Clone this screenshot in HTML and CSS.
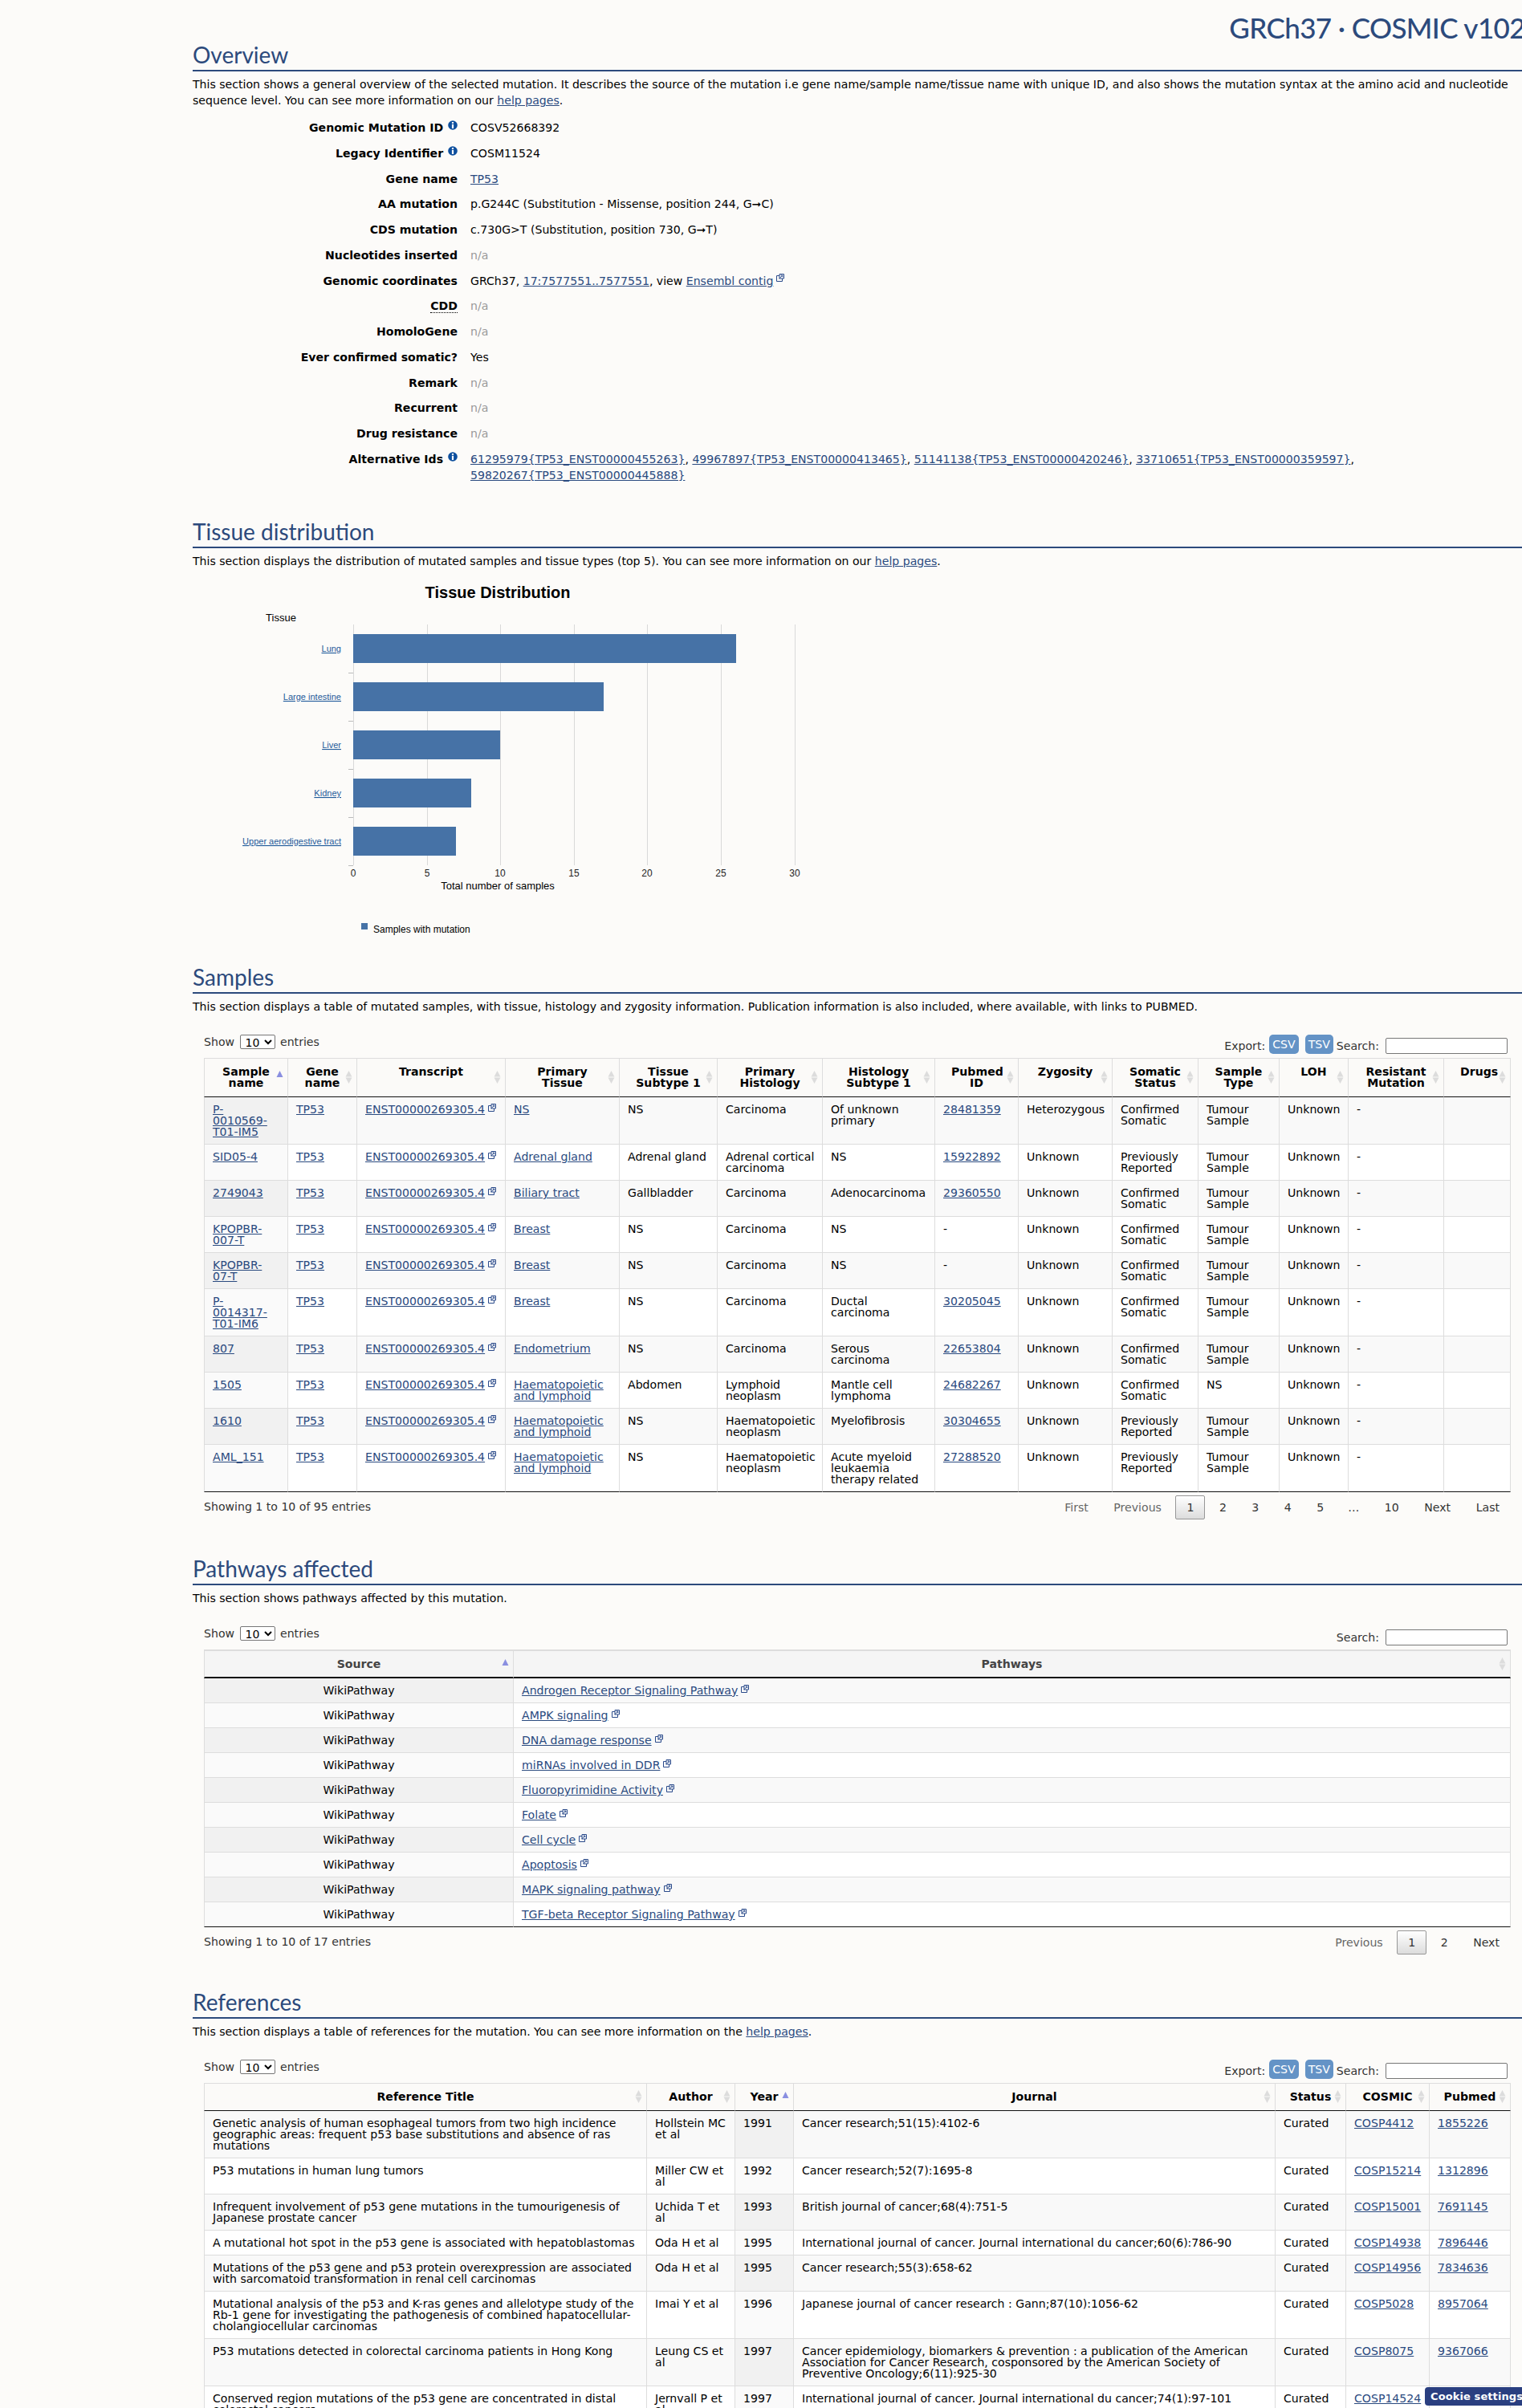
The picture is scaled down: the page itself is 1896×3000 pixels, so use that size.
FILE: index.html
```html
<!DOCTYPE html>
<html lang="en">
<head>
<meta charset="utf-8">
<title>GRCh37 · COSMIC v102</title>
<link rel="stylesheet" href="styles.css">
</head>
<body>
<svg class="defs" width="0" height="0" aria-hidden="true">
  <symbol id="ext" viewBox="0 0 10 10"><path d="M.5 2.500H4M.5 2.500V9.500H7.500V6" fill="none" stroke="#2a4a8a" stroke-width="1"/><path d="M4 .5H9.500V6H4z" fill="#fff" stroke="#2a4a8a" stroke-width="1"/><path d="M7.800 2L3.500 6.300M5.600 2H7.800V4.200" fill="none" stroke="#2a4a8a" stroke-width="1"/></symbol>
  <symbol id="info" viewBox="0 0 12 12"><circle cx="6" cy="6" r="5.800" fill="#0d4f9e"/><rect x="4.900" y="2" width="2.200" height="1.800" fill="#fff"/><rect x="4.900" y="4.800" width="2.200" height="5.200" fill="#fff"/></symbol>
  <symbol id="sort" viewBox="0 0 9 16"><path d="M4.500 0L8.500 7.500H.5z" fill="#dcdcdc"/><path d="M4.500 16L8.500 8.500H.5z" fill="#dcdcdc"/></symbol>
  <symbol id="asc" viewBox="0 0 9 8"><path d="M4.500 0L8.500 8H.5z" fill="#8a8fe0"/></symbol>
</svg>
<div class="page">
  <header class="top"><div class="brand">GRCh37 · COSMIC v102</div></header>

  <section class="sec sec-ov">
    <h2>Overview</h2>
    <p class="intro">This section shows a general overview of the selected mutation. It describes the source of the mutation i.e gene name/sample name/tissue name with unique ID, and also shows the mutation syntax at the amino acid and nucleotide sequence level. You can see more information on our <a href="#">help pages</a>.</p>
    <dl class="facts">
      <dt>Genomic Mutation ID <svg class="ii"><use href="#info"/></svg></dt><dd>COSV52668392</dd>
      <dt>Legacy Identifier <svg class="ii"><use href="#info"/></svg></dt><dd>COSM11524</dd>
      <dt>Gene name</dt><dd><a href="#">TP53</a></dd>
      <dt>AA mutation</dt><dd>p.G244C (Substitution - Missense, position 244, G➞C)</dd>
      <dt>CDS mutation</dt><dd>c.730G&gt;T (Substitution, position 730, G➞T)</dd>
      <dt>Nucleotides inserted</dt><dd class="na">n/a</dd>
      <dt>Genomic coordinates</dt><dd>GRCh37, <a href="#">17:7577551..7577551</a>, view <a href="#">Ensembl contig</a><svg class="xi"><use href="#ext"/></svg></dd>
      <dt><abbr>CDD</abbr></dt><dd class="na">n/a</dd>
      <dt>HomoloGene</dt><dd class="na">n/a</dd>
      <dt>Ever confirmed somatic?</dt><dd>Yes</dd>
      <dt>Remark</dt><dd class="na">n/a</dd>
      <dt>Recurrent</dt><dd class="na">n/a</dd>
      <dt>Drug resistance</dt><dd class="na">n/a</dd>
      <dt>Alternative Ids <svg class="ii"><use href="#info"/></svg></dt><dd><a href="#">61295979{TP53_ENST00000455263}</a>, <a href="#">49967897{TP53_ENST00000413465}</a>, <a href="#">51141138{TP53_ENST00000420246}</a>, <a href="#">33710651{TP53_ENST00000359597}</a>, <a href="#">59820267{TP53_ENST00000445888}</a></dd>
    </dl>
  </section>

  <section class="sec sec-ti">
    <h2>Tissue distribution</h2>
    <p class="intro">This section displays the distribution of mutated samples and tissue types (top 5). You can see more information on our <a href="#">help pages</a>.</p>
    <svg class="chart" width="760" height="450" viewBox="240 720 760 450">
      <text class="c-title" x="620" y="745" text-anchor="middle">Tissue Distribution</text>
      <text class="c-13" x="350" y="774" text-anchor="middle">Tissue</text>
      <g class="c-grid">
        <path d="M440.500 778V1078M532.500 778V1078M623.500 778V1078M715.500 778V1078M806.500 778V1078M898.500 778V1078M990.500 778V1078"/>
        <path class="c-tick" d="M434 838.500h6M434 898.500h6M434 958.500h6M434 1018.500h6M434 1078.500h6"/>
      </g>
      <g class="c-bar">
        <rect x="440" y="790" width="477" height="36"/>
        <rect x="440" y="850" width="312" height="36"/>
        <rect x="440" y="910" width="183" height="36"/>
        <rect x="440" y="970" width="147" height="36"/>
        <rect x="440" y="1030" width="128" height="36"/>
      </g>
      <g class="c-link" text-anchor="end">
        <text x="425" y="812">Lung</text>
        <text x="425" y="872">Large intestine</text>
        <text x="425" y="932">Liver</text>
        <text x="425" y="992">Kidney</text>
        <text x="425" y="1052">Upper aerodigestive tract</text>
      </g>
      <g class="c-11" text-anchor="middle">
        <text x="440" y="1092">0</text><text x="532" y="1092">5</text><text x="623" y="1092">10</text><text x="715" y="1092">15</text><text x="806" y="1092">20</text><text x="898" y="1092">25</text><text x="990" y="1092">30</text>
      </g>
      <text class="c-13" x="620" y="1108" text-anchor="middle">Total number of samples</text>
      <rect class="c-leg" x="450" y="1150" width="8" height="8"/>
      <text class="c-12" x="465" y="1162">Samples with mutation</text>
    </svg>
  </section>

  <section class="sec sec-sa">
    <h2>Samples</h2>
    <p class="intro">This section displays a table of mutated samples, with tissue, histology and zygosity information. Publication information is also included, where available, with links to PUBMED.</p>
    <div class="dt">
      <div class="dt-top">
        <label class="len">Show <select><option>10</option></select> entries</label>
        <div class="tools"><span>Export:</span><a class="btn">CSV</a><a class="btn">TSV</a><span>Search:</span><input type="text"></div>
      </div>
      <table class="tb sample">
        <colgroup><col class="s1"><col class="s2"><col class="s3"><col class="s4"><col class="s5"><col class="s6"><col class="s7"><col class="s8"><col class="s9"><col class="s10"><col class="s11"><col class="s12"><col class="s13"><col class="s14"></colgroup>
        <thead><tr>
          <th>Sample name<svg class="so up"><use href="#asc"/></svg></th><th>Gene name<svg class="so"><use href="#sort"/></svg></th><th class="tp">Transcript<svg class="so"><use href="#sort"/></svg></th><th>Primary Tissue<svg class="so"><use href="#sort"/></svg></th><th>Tissue Subtype 1<svg class="so"><use href="#sort"/></svg></th><th>Primary Histology<svg class="so"><use href="#sort"/></svg></th><th>Histology Subtype 1<svg class="so"><use href="#sort"/></svg></th><th>Pubmed ID<svg class="so"><use href="#sort"/></svg></th><th class="tp">Zygosity<svg class="so"><use href="#sort"/></svg></th><th>Somatic Status<svg class="so"><use href="#sort"/></svg></th><th>Sample Type<svg class="so"><use href="#sort"/></svg></th><th class="tp">LOH<svg class="so"><use href="#sort"/></svg></th><th>Resistant Mutation<svg class="so"><use href="#sort"/></svg></th><th class="tp">Drugs<svg class="so"><use href="#sort"/></svg></th>
        </tr></thead>
        <tbody>
          <tr><td class="st"><a href="#">P-0010569-T01-IM5</a></td><td><a href="#">TP53</a></td><td><a href="#">ENST00000269305.4</a><svg class="xi"><use href="#ext"/></svg></td><td><a href="#">NS</a></td><td>NS</td><td>Carcinoma</td><td>Of unknown primary</td><td><a href="#">28481359</a></td><td>Heterozygous</td><td>Confirmed Somatic</td><td>Tumour Sample</td><td>Unknown</td><td>-</td><td></td></tr>
          <tr><td class="st"><a href="#">SID05-4</a></td><td><a href="#">TP53</a></td><td><a href="#">ENST00000269305.4</a><svg class="xi"><use href="#ext"/></svg></td><td><a href="#">Adrenal gland</a></td><td>Adrenal gland</td><td>Adrenal cortical carcinoma</td><td>NS</td><td><a href="#">15922892</a></td><td>Unknown</td><td>Previously Reported</td><td>Tumour Sample</td><td>Unknown</td><td>-</td><td></td></tr>
          <tr><td class="st"><a href="#">2749043</a></td><td><a href="#">TP53</a></td><td><a href="#">ENST00000269305.4</a><svg class="xi"><use href="#ext"/></svg></td><td><a href="#">Biliary tract</a></td><td>Gallbladder</td><td>Carcinoma</td><td>Adenocarcinoma</td><td><a href="#">29360550</a></td><td>Unknown</td><td>Confirmed Somatic</td><td>Tumour Sample</td><td>Unknown</td><td>-</td><td></td></tr>
          <tr><td class="st"><a href="#">KPOPBR-007-T</a></td><td><a href="#">TP53</a></td><td><a href="#">ENST00000269305.4</a><svg class="xi"><use href="#ext"/></svg></td><td><a href="#">Breast</a></td><td>NS</td><td>Carcinoma</td><td>NS</td><td>-</td><td>Unknown</td><td>Confirmed Somatic</td><td>Tumour Sample</td><td>Unknown</td><td>-</td><td></td></tr>
          <tr><td class="st"><a href="#">KPOPBR-07-T</a></td><td><a href="#">TP53</a></td><td><a href="#">ENST00000269305.4</a><svg class="xi"><use href="#ext"/></svg></td><td><a href="#">Breast</a></td><td>NS</td><td>Carcinoma</td><td>NS</td><td>-</td><td>Unknown</td><td>Confirmed Somatic</td><td>Tumour Sample</td><td>Unknown</td><td>-</td><td></td></tr>
          <tr><td class="st"><a href="#">P-0014317-T01-IM6</a></td><td><a href="#">TP53</a></td><td><a href="#">ENST00000269305.4</a><svg class="xi"><use href="#ext"/></svg></td><td><a href="#">Breast</a></td><td>NS</td><td>Carcinoma</td><td>Ductal carcinoma</td><td><a href="#">30205045</a></td><td>Unknown</td><td>Confirmed Somatic</td><td>Tumour Sample</td><td>Unknown</td><td>-</td><td></td></tr>
          <tr><td class="st"><a href="#">807</a></td><td><a href="#">TP53</a></td><td><a href="#">ENST00000269305.4</a><svg class="xi"><use href="#ext"/></svg></td><td><a href="#">Endometrium</a></td><td>NS</td><td>Carcinoma</td><td>Serous carcinoma</td><td><a href="#">22653804</a></td><td>Unknown</td><td>Confirmed Somatic</td><td>Tumour Sample</td><td>Unknown</td><td>-</td><td></td></tr>
          <tr><td class="st"><a href="#">1505</a></td><td><a href="#">TP53</a></td><td><a href="#">ENST00000269305.4</a><svg class="xi"><use href="#ext"/></svg></td><td><a href="#">Haematopoietic and lymphoid</a></td><td>Abdomen</td><td>Lymphoid neoplasm</td><td>Mantle cell lymphoma</td><td><a href="#">24682267</a></td><td>Unknown</td><td>Confirmed Somatic</td><td>NS</td><td>Unknown</td><td>-</td><td></td></tr>
          <tr><td class="st"><a href="#">1610</a></td><td><a href="#">TP53</a></td><td><a href="#">ENST00000269305.4</a><svg class="xi"><use href="#ext"/></svg></td><td><a href="#">Haematopoietic and lymphoid</a></td><td>NS</td><td>Haematopoietic neoplasm</td><td>Myelofibrosis</td><td><a href="#">30304655</a></td><td>Unknown</td><td>Previously Reported</td><td>Tumour Sample</td><td>Unknown</td><td>-</td><td></td></tr>
          <tr><td class="st"><a href="#">AML_151</a></td><td><a href="#">TP53</a></td><td><a href="#">ENST00000269305.4</a><svg class="xi"><use href="#ext"/></svg></td><td><a href="#">Haematopoietic and lymphoid</a></td><td>NS</td><td>Haematopoietic neoplasm</td><td>Acute myeloid leukaemia therapy related</td><td><a href="#">27288520</a></td><td>Unknown</td><td>Previously Reported</td><td>Tumour Sample</td><td>Unknown</td><td>-</td><td></td></tr>
        </tbody>
      </table>
      <div class="dt-bot">
        <span>Showing 1 to 10 of 95 entries</span>
        <div class="pg"><a class="off">First</a><a class="off">Previous</a><a class="cur">1</a><a>2</a><a>3</a><a>4</a><a>5</a><i>…</i><a>10</a><a>Next</a><a>Last</a></div>
      </div>
    </div>
  </section>

  <section class="sec sec-pa">
    <h2>Pathways affected</h2>
    <p class="intro">This section shows pathways affected by this mutation.</p>
    <div class="dt">
      <div class="dt-top">
        <label class="len">Show <select><option>10</option></select> entries</label>
        <div class="tools"><span>Search:</span><input type="text"></div>
      </div>
      <table class="tb path">
        <colgroup><col class="p1"><col></colgroup>
        <thead><tr><th>Source<svg class="so up corner"><use href="#asc"/></svg></th><th>Pathways<svg class="so"><use href="#sort"/></svg></th></tr></thead>
        <tbody>
          <tr><td class="st">WikiPathway</td><td><a href="#">Androgen Receptor Signaling Pathway</a><svg class="xi"><use href="#ext"/></svg></td></tr>
          <tr><td class="st">WikiPathway</td><td><a href="#">AMPK signaling</a><svg class="xi"><use href="#ext"/></svg></td></tr>
          <tr><td class="st">WikiPathway</td><td><a href="#">DNA damage response</a><svg class="xi"><use href="#ext"/></svg></td></tr>
          <tr><td class="st">WikiPathway</td><td><a href="#">miRNAs involved in DDR</a><svg class="xi"><use href="#ext"/></svg></td></tr>
          <tr><td class="st">WikiPathway</td><td><a href="#">Fluoropyrimidine Activity</a><svg class="xi"><use href="#ext"/></svg></td></tr>
          <tr><td class="st">WikiPathway</td><td><a href="#">Folate</a><svg class="xi"><use href="#ext"/></svg></td></tr>
          <tr><td class="st">WikiPathway</td><td><a href="#">Cell cycle</a><svg class="xi"><use href="#ext"/></svg></td></tr>
          <tr><td class="st">WikiPathway</td><td><a href="#">Apoptosis</a><svg class="xi"><use href="#ext"/></svg></td></tr>
          <tr><td class="st">WikiPathway</td><td><a href="#">MAPK signaling pathway</a><svg class="xi"><use href="#ext"/></svg></td></tr>
          <tr><td class="st">WikiPathway</td><td><a href="#">TGF-beta Receptor Signaling Pathway</a><svg class="xi"><use href="#ext"/></svg></td></tr>
        </tbody>
      </table>
      <div class="dt-bot">
        <span>Showing 1 to 10 of 17 entries</span>
        <div class="pg"><a class="off">Previous</a><a class="cur">1</a><a>2</a><a>Next</a></div>
      </div>
    </div>
  </section>

  <section class="sec sec-re">
    <h2>References</h2>
    <p class="intro">This section displays a table of references for the mutation. You can see more information on the <a href="#">help pages</a>.</p>
    <div class="dt">
      <div class="dt-top">
        <label class="len">Show <select><option>10</option></select> entries</label>
        <div class="tools"><span>Export:</span><a class="btn">CSV</a><a class="btn">TSV</a><span>Search:</span><input type="text"></div>
      </div>
      <table class="tb refs">
        <colgroup><col class="r1"><col class="r2"><col class="r3"><col class="r4"><col class="r5"><col class="r6"><col class="r7"></colgroup>
        <thead><tr><th>Reference Title<svg class="so"><use href="#sort"/></svg></th><th>Author<svg class="so"><use href="#sort"/></svg></th><th>Year<svg class="so up corner"><use href="#asc"/></svg></th><th>Journal<svg class="so"><use href="#sort"/></svg></th><th>Status<svg class="so"><use href="#sort"/></svg></th><th>COSMIC<svg class="so"><use href="#sort"/></svg></th><th>Pubmed<svg class="so"><use href="#sort"/></svg></th></tr></thead>
        <tbody>
          <tr><td>Genetic analysis of human esophageal tumors from two high incidence geographic areas: frequent p53 base substitutions and absence of ras mutations</td><td>Hollstein MC et al</td><td class="st">1991</td><td>Cancer research;51(15):4102-6</td><td>Curated</td><td><a href="#">COSP4412</a></td><td><a href="#">1855226</a></td></tr>
          <tr><td>P53 mutations in human lung tumors</td><td>Miller CW et al</td><td class="st">1992</td><td>Cancer research;52(7):1695-8</td><td>Curated</td><td><a href="#">COSP15214</a></td><td><a href="#">1312896</a></td></tr>
          <tr><td>Infrequent involvement of p53 gene mutations in the tumourigenesis of Japanese prostate cancer</td><td>Uchida T et al</td><td class="st">1993</td><td>British journal of cancer;68(4):751-5</td><td>Curated</td><td><a href="#">COSP15001</a></td><td><a href="#">7691145</a></td></tr>
          <tr><td>A mutational hot spot in the p53 gene is associated with hepatoblastomas</td><td>Oda H et al</td><td class="st">1995</td><td>International journal of cancer. Journal international du cancer;60(6):786-90</td><td>Curated</td><td><a href="#">COSP14938</a></td><td><a href="#">7896446</a></td></tr>
          <tr><td>Mutations of the p53 gene and p53 protein overexpression are associated with sarcomatoid transformation in renal cell carcinomas</td><td>Oda H et al</td><td class="st">1995</td><td>Cancer research;55(3):658-62</td><td>Curated</td><td><a href="#">COSP14956</a></td><td><a href="#">7834636</a></td></tr>
          <tr><td>Mutational analysis of the p53 and K-ras genes and allelotype study of the Rb-1 gene for investigating the pathogenesis of combined hapatocellular-cholangiocellular carcinomas</td><td>Imai Y et al</td><td class="st">1996</td><td>Japanese journal of cancer research : Gann;87(10):1056-62</td><td>Curated</td><td><a href="#">COSP5028</a></td><td><a href="#">8957064</a></td></tr>
          <tr><td>P53 mutations detected in colorectal carcinoma patients in Hong Kong</td><td>Leung CS et al</td><td class="st">1997</td><td>Cancer epidemiology, biomarkers &amp; prevention : a publication of the American Association for Cancer Research, cosponsored by the American Society of Preventive Oncology;6(11):925-30</td><td>Curated</td><td><a href="#">COSP8075</a></td><td><a href="#">9367066</a></td></tr>
          <tr><td>Conserved region mutations of the p53 gene are concentrated in distal colorectal cancers</td><td>Jernvall P et al</td><td class="st">1997</td><td>International journal of cancer. Journal international du cancer;74(1):97-101</td><td>Curated</td><td><a href="#">COSP14524</a></td><td></td></tr>
        </tbody>
      </table>
    </div>
  </section>
</div>
<button class="cookie">Cookie settings</button>
</body>
</html>
```
FILE: styles.css
```css
html, body { margin: 0; padding: 0; }
html { overflow-x: hidden; }
body { background: #fcfbf9; color: #000; font: 14.100px/20px "DejaVu Sans", Verdana, sans-serif; overflow-x: hidden; }
.defs { position: absolute; }
a { color: #2a4a7f; text-decoration: underline; }
.page { margin-left: 240px; }
.top { height: 57px; display: flex; justify-content: flex-end; }
.brand { font: 500 35px/44px Lato, sans-serif; letter-spacing: -.6px; color: #2c4a7c; white-space: nowrap; padding-top: 12px; margin-right: -4px; }
h2 { margin: 0; font: 400 28px/23px Lato, sans-serif; color: #2c4a7c; border-bottom: 2px solid #2c4a7c; height: 30px; }
.intro { margin: 6px 0 0; line-height: 20px; padding-right: 14px; }
.facts { display: grid; grid-template-columns: 330px 1fr; column-gap: 16px; row-gap: 11.770px; margin: 14px 0 0; }
dt { text-align: right; font-weight: bold; line-height: 20px; white-space: nowrap; }
dd { margin: 0; line-height: 20px; }
.na { color: #999; }
abbr { border-bottom: 1px dotted #000; }
.ii { width: 12px; height: 12px; vertical-align: 2px; margin-left: 1px; }
.xi { width: 10px; height: 10px; margin-left: 4px; vertical-align: 4px; }
.tb .xi { vertical-align: 2px; }
.sec-ti { margin-top: 49px; }
.chart { display: block; margin-top: 11px; font-family: "Liberation Sans", Arial, sans-serif; }
.c-title { font-size: 20px; font-weight: bold; }
.c-13 { font-size: 13px; }
.c-12 { font-size: 12px; }
.c-11 { font-size: 12px; fill: #222; }
.c-grid path { stroke: #d9d9d9; stroke-width: 1; fill: none; }
.c-grid .c-tick { stroke: #bbb; }
.c-bar rect, .c-leg { fill: #4672a6; }
.c-link { font-size: 11px; fill: #1f5a9a; text-decoration: underline; }
.sec-sa { margin-top: 36px; }
.sec-pa { margin-top: 50px; }
.sec-re { margin-top: 48px; }
.dt { margin: 0 0 0 14px; width: 1628px; }
.dt-top { box-sizing: border-box; display: flex; justify-content: space-between; align-items: flex-end; margin-top: 20px; height: 34px; color: #333; padding-bottom: 5px; }
.len { align-self: flex-start; padding-top: 5px; line-height: 18px; }
select { font: 14px "DejaVu Sans", sans-serif; width: 44px; height: 18px; margin: 0 2px; background: #fff; border: 1px solid #777; border-radius: 2px; padding: 0 0 0 2px; vertical-align: top; }
.tools { display: flex; align-items: flex-end; padding-right: 4px; }
.btn { background: #6493c6; color: #fff; border-radius: 5px; padding: 0 4px; line-height: 24px; height: 24px; margin-left: 5px; text-decoration: none; }
.btn + .btn { margin-left: 8px; }
.btn + span { margin-left: 4px; }
.tools input { width: 152px; height: 20px; box-sizing: border-box; margin-left: 8px; border: 1px solid #777; border-radius: 2px; background: #fff; padding: 0; }
.tb { border-collapse: separate; border-spacing: 0; table-layout: fixed; width: 1628px; line-height: 14px; background: #fff; }
.tb th { position: relative; font-weight: bold; text-align: center; vertical-align: middle; padding: 9px 20px 10px; border-top: 1px solid #ddd; border-left: 1px solid #ddd; border-bottom: 1px solid #111; background: #fbfaf8; }
.tb th:last-child { border-right: 1px solid #ddd; }
.tb th.tp { vertical-align: top; }
.tb td { padding: 8px 10px; vertical-align: top; border-left: 1px solid #ddd; border-bottom: 1px solid #ddd; overflow-wrap: break-word; }
.tb td:last-child { border-right: 1px solid #ddd; }
.tb tbody tr:nth-child(odd) td { background: #f9f9f9; }
.tb tbody tr:nth-child(odd) td.st { background: #f1f1f1; }
.tb tbody tr:nth-child(even) td.st { background: #fafafa; }
.tb tbody tr:last-child td { border-bottom: 1px solid #111; }
.so { position: absolute; right: 5px; top: 50%; transform: translateY(-50%); width: 9px; height: 16px; }
.so.up { height: 8px; margin-top: -4px; }
.so.corner { top: 10px; transform: none; margin-top: 0; }
.s1{width:104px}.s2{width:86px}.s3{width:185px}.s4{width:142px}.s5{width:122px}.s6{width:131px}.s7{width:140px}.s8{width:104px}.s9{width:117px}.s10{width:107px}.s11{width:101px}.s12{width:86px}.s13{width:119px}.s14{width:84px}
.sample td:first-child { padding-right: 14px; }
.sample td:nth-child(3), .sample td:nth-child(6), .sample td:nth-child(9), .sample td:nth-child(12), .refs td:nth-child(6) { padding-right: 5px; }
.sample td:nth-child(3) { white-space: nowrap; }
.p1 { width: 385px; }
.path th { background: #f5f5f5; color: #444; border-top-width: 2px; border-bottom-width: 2px; padding: 9px 18px; }
.path td { text-align: left; }
.path td.st { text-align: center; }
.r1{width:551px}.r2{width:110px}.r3{width:73px}.r4{width:600px}.r5{width:88px}.r6{width:104px}.r7{width:102px}
.refs th { padding: 9px 16px 10px; }
.dt-bot { display: flex; justify-content: space-between; color: #333; margin-top: 4px; height: 30px; align-items: flex-start; }
.dt-bot > span { padding-top: 4px; }
.pg { display: flex; align-items: center; height: 30px; }
.pg a { text-decoration: none; color: #333; padding: 0 13px; line-height: 28px; border: 1px solid transparent; margin-left: 3.500px; }
.pg i { font-style: normal; color: #333; padding: 0 14px; margin-left: 2px; }
.pg a.off { color: #666; }
.pg a.cur { background: linear-gradient(#fff, #dcdcdc); border: 1px solid #979797; border-radius: 2px; }
.cookie { position: fixed; left: 1775px; bottom: 3px; height: 23px; padding: 0 6px 0 7px; background: #2a3f80; color: #fff; border: 0; border-radius: 4px 0 0 4px; font: bold 13px "DejaVu Sans", sans-serif; letter-spacing: .1px; white-space: nowrap; }
```
